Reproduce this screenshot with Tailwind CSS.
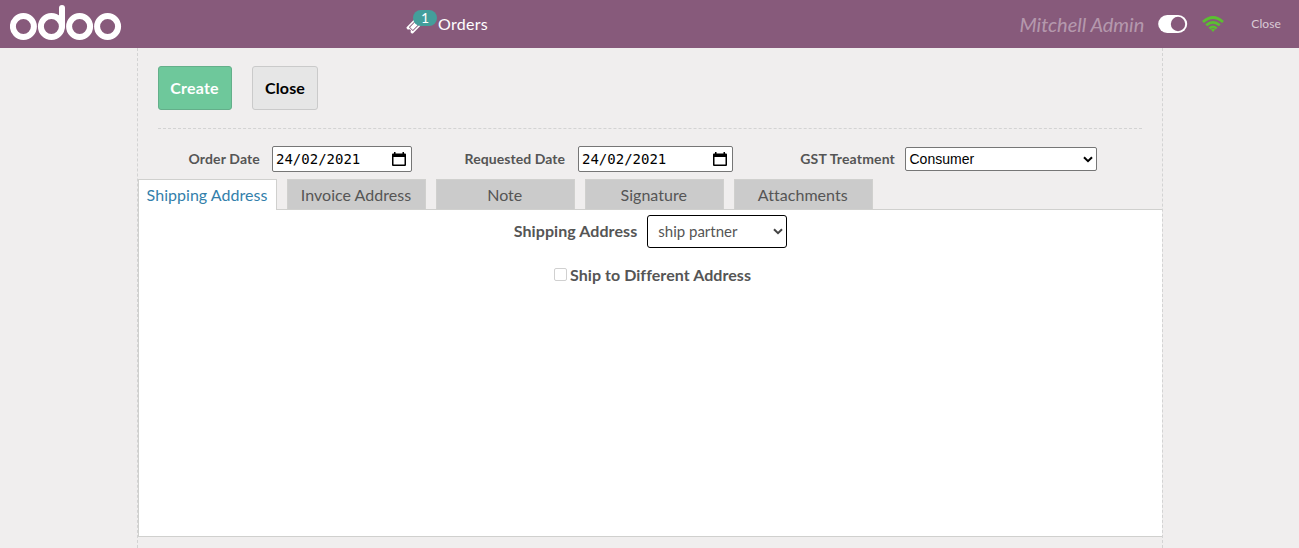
<!DOCTYPE html>
<html lang="en">
<head>
<meta charset="utf-8">
<title>Odoo</title>
<script src="https://cdn.jsdelivr.net/npm/@tailwindcss/browser@4"></script>
</head>
<body class="h-[548px] overflow-hidden bg-[#f0eeee] font-['Lato',sans-serif] text-[#555555]">
<header class="flex h-12 items-center bg-[#875a7b] text-white">
  <svg class="ml-[10px] h-12 w-[112px] shrink-0" viewBox="10 0 112 48" fill="none" stroke="#fff" stroke-width="6" stroke-linecap="round">
    <circle cx="23.4" cy="26.5" r="10.5"/><circle cx="51.4" cy="26.5" r="10.5"/><circle cx="79.6" cy="26.5" r="10.5"/><circle cx="107.6" cy="26.5" r="10.5"/>
    <path d="M62 8V26.500"/>
  </svg>
  <div class="relative ml-[283px] flex w-[83px] items-center">
    <svg class="mt-[3px] ml-px h-[16px] w-[16px] shrink-0" viewBox="0 0 1792 1792" fill="#fff"><path d="M1024 452l316 316-572 572-316-316zm-211 979l618-618q19-19 19-45t-19-45l-362-362q-18-18-45-18t-45 18l-618 618q-19 19-19 45t19 45l362 362q18 18 45 18t45-18zm889-637l-907 908q-37 37-90.500 37t-90.500-37l-126-126q56-56 56-136t-56-136-136-56-136 56l-125-126q-37-37-37-90.500t37-90.500l907-906q37-37 90.500-37t90.500 37l125 125q-56 56-56 136t56 136 136 56 136-56l126 125q37 37 37 90.500t-37 90.500z"/></svg>
    <span class="absolute -top-[2px] left-[8px] h-4 w-6 rounded-full bg-[#439e9b] text-center text-[14px] leading-[15px]">1</span>
    <span class="ml-[16px] text-[16px] leading-6 tracking-[0.3px]">Orders</span>
  </div>
  <div class="ml-auto flex items-center">
    <span class="text-[20px] leading-6 italic text-white/40">Mitchell Admin</span>
    <svg class="ml-[14px] h-[18px] w-[30px]" viewBox="0 0 30 18"><rect x=".2" y="0" width="29" height="18" rx="9" fill="#fff"/><circle cx="20" cy="9" r="7.200" fill="#875a7b"/></svg>
    <svg class="ml-[14px] h-[16px] w-[22px]" viewBox="0 0 22 16" fill="none" stroke="#5bbf31" stroke-width="2.700"><path d="M1 6Q11-3 21 6M4.200 9.300Q11 3.300 17.800 9.300M7.400 12.400Q11 9.200 14.600 12.400"/><path d="M8.900 13.500Q11 12 13.100 13.500L11 15.900Z" fill="#5bbf31" stroke="none"/></svg>
    <span class="mr-[18px] ml-[27px] text-[12px] leading-4 tracking-[0.1px] text-white/70">Close</span>
  </div>
</header>
<main class="ml-[137px] flex h-[500px] w-[1026px] flex-col border-x border-dashed border-[#d3d3d3]">
  <div class="mx-[20px] flex h-[81px] shrink-0 gap-5 border-b border-dashed border-[#d3d3d3] pt-[18px] text-[16px] font-bold">
    <button class="h-11 w-[74px] rounded-[3px] border border-[#64af8a] bg-[#6ec89b] pr-px tracking-[0.2px] text-white">Create</button>
    <button class="h-11 w-[66px] rounded-[3px] border border-[#cacaca] bg-[#e6e6e6] tracking-[0.1px] text-black">Close</button>
  </div>
  <div class="flex h-[50px] shrink-0 items-center pt-[10px] text-[14px] font-bold">
    <span class="-mt-[2px] w-[122px] text-right tracking-[0.15px]">Order Date</span>
    <div class="ml-3 flex h-[26px] w-[140px] items-center justify-between rounded-[2px] border border-[#767676] bg-white pr-1 pl-[3px] font-['DejaVu_Sans_Mono',monospace] text-[14px] font-normal text-black">
      <span>24/02/2021</span>
      <svg class="mr-[1px] h-[14px] w-[14px]" viewBox="0 0 14 14"><path fill-rule="evenodd" d="M2 0H3.500v1.400h7V0H12v1.400H13a1 1 0 0 1 1 1V13a1 1 0 0 1-1 1H1a1 1 0 0 1-1-1V2.400a1 1 0 0 1 1-1h1zM1.500 5v7.500h11V5z"/></svg>
    </div>
    <span class="-mt-[2px] w-[153px] text-right tracking-[0.06px]">Requested Date</span>
    <div class="ml-[13px] flex h-[26px] w-[155px] items-center justify-between rounded-[2px] border border-[#767676] bg-white pr-1 pl-[3px] font-['DejaVu_Sans_Mono',monospace] text-[14px] font-normal text-black">
      <span>24/02/2021</span>
      <svg class="mr-[1px] h-[14px] w-[14px]" viewBox="0 0 14 14"><path fill-rule="evenodd" d="M2 0H3.500v1.400h7V0H12v1.400H13a1 1 0 0 1 1 1V13a1 1 0 0 1-1 1H1a1 1 0 0 1-1-1V2.400a1 1 0 0 1 1-1h1zM1.500 5v7.500h11V5z"/></svg>
    </div>
    <span class="-mt-[2px] w-[162px] text-right tracking-[0.16px]">GST Treatment</span>
    <div class="ml-[10px] flex h-6 w-[192px] items-center justify-between rounded-[2px] border border-[#767676] bg-white pr-[3px] pl-[3.5px] font-['Liberation_Sans',sans-serif] text-[14px] font-normal text-black">
      <span>Consumer</span>
      <svg class="h-[7px] w-[10px]" viewBox="0 0 10 7" fill="none" stroke="#000" stroke-width="2"><path d="M1 1.200l4 4 4-4"/></svg>
    </div>
  </div>
  <nav class="relative z-10 -mb-px flex h-[31px] shrink-0 gap-[10px] text-center text-[16px] leading-[29px] tracking-[0.03px]">
    <div class="h-[31px] w-[139px] border border-b-0 border-[#d0d0ce] bg-white pr-[1px] text-[#337fab]">Shipping Address</div>
    <div class="h-[30px] w-[139px] border border-b-0 border-[#d0d0ce] bg-[#cbcbcb] pr-[1px]">Invoice Address</div>
    <div class="h-[30px] w-[139px] border border-b-0 border-[#d0d0ce] bg-[#cbcbcb] pr-[1.5px]">Note</div>
    <div class="h-[30px] w-[139px] border border-b-0 border-[#d0d0ce] bg-[#cbcbcb] pr-[1.5px]">Signature</div>
    <div class="h-[30px] w-[139px] border border-b-0 border-[#d0d0ce] bg-[#cbcbcb] pr-[1.5px]">Attachments</div>
  </nav>
  <section class="flex h-[328px] shrink-0 flex-col items-center border-y border-l border-[#d0d0ce] bg-white pt-[5px] text-[16px]">
    <div class="flex items-center">
      <span class="-mt-[2px] font-bold tracking-[0.08px]">Shipping Address</span>
      <div class="ml-[10px] flex h-[33px] w-[140px] items-center justify-between rounded-[3px] border border-black pr-[3px] pl-[10px]">
        <span class="-mt-px text-[15px]">ship partner</span>
        <svg class="h-[7px] w-[10px]" viewBox="0 0 10 7" fill="none" stroke="#444" stroke-width="2"><path d="M1 1.200l4 4 4-4"/></svg>
      </div>
    </div>
    <label class="mt-[15px] ml-[4px] flex items-center gap-[3px] font-bold tracking-[0.06px]"><span class="-mt-[2px] h-[13px] w-[13px] rounded-[2px] border border-[#d0d0d0] bg-white"></span>Ship to Different Address</label>
  </section>
</main>
</body>
</html>
